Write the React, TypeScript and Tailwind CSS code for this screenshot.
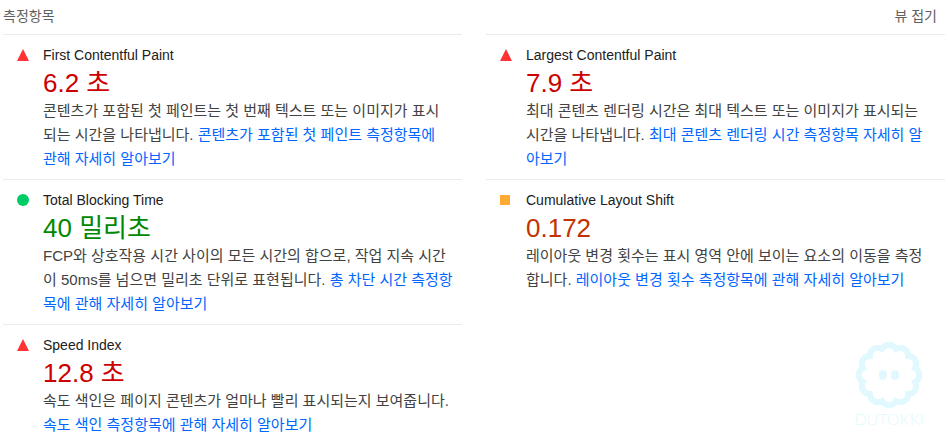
type Rating = "fail" | "average" | "pass";

type Metric = {
  title: string;
  value: string;
  rating: Rating;
  description: string;
  linkText: string;
  href: string;
};

const metrics: Metric[] = [
  {
    title: "First Contentful Paint",
    value: "6.2 초",
    rating: "fail",
    description:
      "콘텐츠가 포함된 첫 페인트는 첫 번째 텍스트 또는 이미지가 표시되는 시간을 나타냅니다.",
    linkText: "콘텐츠가 포함된 첫 페인트 측정항목에 관해 자세히 알아보기",
    href: "#first-contentful-paint",
  },
  {
    title: "Largest Contentful Paint",
    value: "7.9 초",
    rating: "fail",
    description:
      "최대 콘텐츠 렌더링 시간은 최대 텍스트 또는 이미지가 표시되는 시간을 나타냅니다.",
    linkText: "최대 콘텐츠 렌더링 시간 측정항목 자세히 알아보기",
    href: "#largest-contentful-paint",
  },
  {
    title: "Total Blocking Time",
    value: "40 밀리초",
    rating: "pass",
    description:
      "FCP와 상호작용 시간 사이의 모든 시간의 합으로, 작업 지속 시간이 50ms를 넘으면 밀리초 단위로 표현됩니다.",
    linkText: "총 차단 시간 측정항목에 관해 자세히 알아보기",
    href: "#total-blocking-time",
  },
  {
    title: "Cumulative Layout Shift",
    value: "0.172",
    rating: "average",
    description:
      "레이아웃 변경 횟수는 표시 영역 안에 보이는 요소의 이동을 측정합니다.",
    linkText: "레이아웃 변경 횟수 측정항목에 관해 자세히 알아보기",
    href: "#cumulative-layout-shift",
  },
  {
    title: "Speed Index",
    value: "12.8 초",
    rating: "fail",
    description: "속도 색인은 페이지 콘텐츠가 얼마나 빨리 표시되는지 보여줍니다.",
    linkText: "속도 색인 측정항목에 관해 자세히 알아보기",
    href: "#speed-index",
  },
];

const valueColors: Record<Rating, string> = {
  fail: "text-[#cc0000]",
  average: "text-[#c33300]",
  pass: "text-[#008800]",
};

function RatingIcon({ rating }: { rating: Rating }) {
  if (rating === "pass") {
    return <span className="block size-3 rounded-full bg-[#00cc66]" />;
  }
  if (rating === "average") {
    return <span className="block size-[10px] bg-[#ffaa33]" />;
  }
  return (
    <svg viewBox="0 0 12 12" className="size-3" aria-hidden="true">
      <path d="M6 0l6 12H0z" fill="#ff3333" />
    </svg>
  );
}

function MetricItem({ metric }: { metric: Metric }) {
  return (
    <article className="flex border-t border-[#ebebeb] py-2 pr-[9px] pl-[14px]">
      <div className="flex h-6 w-[26px] shrink-0 items-center">
        <RatingIcon rating={metric.rating} />
      </div>
      <div className="min-w-0 flex-1">
        <h3 className="text-sm leading-6 text-[#212121]">{metric.title}</h3>
        <p className={`text-[26px] leading-8 ${valueColors[metric.rating]}`}>
          {metric.value}
        </p>
        <p className="text-[15px] leading-6 text-[#424242]">
          {metric.description}{" "}
          <a href={metric.href} className="text-[#0066ff]">
            {metric.linkText}
          </a>
        </p>
      </div>
    </article>
  );
}

// Scalloped outline: twelve bumps around a circle
function Watermark() {
  const points = Array.from({ length: 12 }, (_, i) => {
    const angle = ((i * 30 - 105) * Math.PI) / 180;
    return [34 + 27 * Math.cos(angle), 34 + 27 * Math.sin(angle)];
  });
  const outline =
    points
      .map(([x, y], i) => {
        if (i === 0) return `M${x} ${y}`;
        return `A8 8 0 0 1 ${x} ${y}`;
      })
      .join(" ") + ` A8 8 0 0 1 ${points[0][0]} ${points[0][1]}Z`;

  return (
    <div className="pointer-events-none absolute right-6 bottom-4 flex flex-col items-center text-[#e1f9fe]">
      <svg viewBox="0 0 68 68" className="size-[68px]" aria-hidden="true">
        <path
          d={outline}
          fill="none"
          stroke="currentColor"
          strokeWidth="6"
          strokeLinejoin="miter"
        />
        <rect x="24" y="29" width="8" height="10" rx="4" fill="currentColor" />
        <rect x="36" y="29" width="8" height="10" rx="4" fill="currentColor" />
      </svg>
      <span className="font-[Lato,sans-serif] text-base leading-5 font-light">
        DUTOKKI
      </span>
    </div>
  );
}

export default function App() {
  return (
    <main className="relative bg-white px-[3px] font-['Liberation_Sans','Noto_Sans_CJK_KR',sans-serif]">
      <header className="flex items-center justify-between pt-1 pb-[6px] text-sm leading-6 text-[#616161]">
        <h2>측정항목</h2>
        <button type="button" className="pr-2">
          뷰 접기
        </button>
      </header>
      <div className="grid grid-cols-2 gap-x-6">
        {metrics.map((metric) => (
          <MetricItem key={metric.title} metric={metric} />
        ))}
      </div>
      <Watermark />
    </main>
  );
}
